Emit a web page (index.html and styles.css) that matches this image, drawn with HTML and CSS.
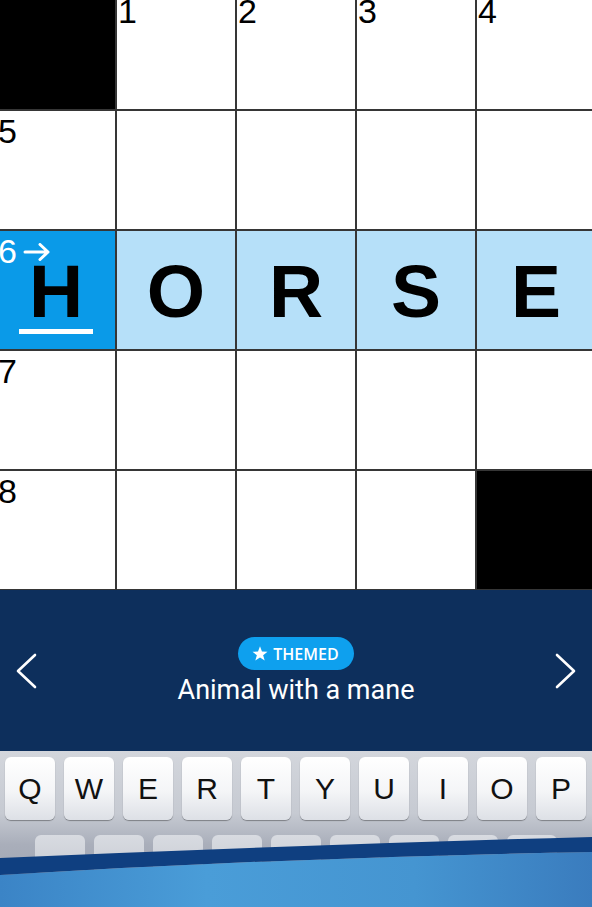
FILE: index.html
```html
<!DOCTYPE html>
<html lang="en">
<head>
    <meta charset="UTF-8">
    <meta name="viewport" content="width=device-width, initial-scale=1.0">
    <title>Crossword</title>
    <link rel="stylesheet" href="styles.css">
</head>
<body>
    <div class="screen">
        <div class="board">
            <!-- row 1 -->
            <div class="cell block"></div>
            <div class="cell"><span class="num">1</span></div>
            <div class="cell"><span class="num">2</span></div>
            <div class="cell"><span class="num">3</span></div>
            <div class="cell"><span class="num">4</span></div>
            <!-- row 2 -->
            <div class="cell"><span class="num">5</span></div>
            <div class="cell"></div>
            <div class="cell"></div>
            <div class="cell"></div>
            <div class="cell"></div>
            <!-- row 3: active word -->
            <div class="cell word active">
                <span class="num">6<svg class="dir" width="28" height="18" viewBox="0 0 28 18"><path d="M2 9 H25 M17 1.5 L25 9 L17 16.5" fill="none" stroke="#fff" stroke-width="3" stroke-linecap="round" stroke-linejoin="round"/></svg></span>
                <span class="letter">H</span>
            </div>
            <div class="cell word"><span class="letter">O</span></div>
            <div class="cell word"><span class="letter">R</span></div>
            <div class="cell word"><span class="letter">S</span></div>
            <div class="cell word"><span class="letter">E</span></div>
            <!-- row 4 -->
            <div class="cell"><span class="num">7</span></div>
            <div class="cell"></div>
            <div class="cell"></div>
            <div class="cell"></div>
            <div class="cell"></div>
            <!-- row 5 -->
            <div class="cell"><span class="num">8</span></div>
            <div class="cell"></div>
            <div class="cell"></div>
            <div class="cell"></div>
            <div class="cell block"></div>
        </div>

        <div class="clue-bar">
            <button class="nav">
                <svg width="24" height="36" viewBox="0 0 24 36"><path d="M20 2 L3 18 L20 34" fill="none" stroke="#fff" stroke-width="2.6" stroke-linecap="round" stroke-linejoin="round"/></svg>
            </button>
            <div class="clue">
                <span class="badge">
                    <svg width="16" height="15" viewBox="0 0 24 23"><path d="M12 0.5 L15 8.6 L23.5 8.8 L16.8 14.1 L19.2 22.4 L12 17.5 L4.8 22.4 L7.2 14.1 L0.5 8.8 L9 8.6 Z" fill="#fff"/></svg>
                    THEMED
                </span>
                <p class="clue-text">Animal with a mane</p>
            </div>
            <button class="nav">
                <svg width="24" height="36" viewBox="0 0 24 36"><path d="M4 2 L21 18 L4 34" fill="none" stroke="#fff" stroke-width="2.6" stroke-linecap="round" stroke-linejoin="round"/></svg>
            </button>
        </div>

        <div class="keyboard">
            <div class="key-row">
                <div class="key">Q</div>
                <div class="key">W</div>
                <div class="key">E</div>
                <div class="key">R</div>
                <div class="key">T</div>
                <div class="key">Y</div>
                <div class="key">U</div>
                <div class="key">I</div>
                <div class="key">O</div>
                <div class="key">P</div>
            </div>
            <div class="key-row second">
                <div class="key"></div>
                <div class="key"></div>
                <div class="key"></div>
                <div class="key"></div>
                <div class="key"></div>
                <div class="key"></div>
                <div class="key"></div>
                <div class="key"></div>
                <div class="key"></div>
            </div>
            <!-- blue swoosh laid over the keyboard -->
            <svg class="wave" width="592" height="156" viewBox="0 0 592 156">
                <defs>
                    <linearGradient id="sea" x1="0" y1="0" x2="1" y2="0">
                        <stop offset="0" stop-color="#3b84c6"/>
                        <stop offset="0.35" stop-color="#4a9dd8"/>
                        <stop offset="0.7" stop-color="#4595d1"/>
                        <stop offset="1" stop-color="#3a7cbe"/>
                    </linearGradient>
                </defs>
                <path d="M0 124 Q296 106 592 101 L592 156 L0 156 Z" fill="url(#sea)"/>
                <path d="M0 107 Q296 94 592 86 L592 101 Q296 106 0 124 Z" fill="#0f3f80"/>
            </svg>
        </div>
    </div>
</body>
</html>
```

FILE: styles.css
```css
/* Global */
body {
    margin: 0;
    background-color: #FFFFFF;
    font-family: 'Liberation Sans', Arial, sans-serif;
}

.screen {
    width: 592px;
    height: 907px;
    overflow: hidden;
}

/* Board */
.board {
    display: grid;
    grid-template-columns: repeat(5, 118px);
    grid-auto-rows: 118px;
    gap: 2px;
    width: 598px;
    margin: -9px 0 0 -3px;
    padding-bottom: 1px;
    background-color: #363636; /* grid lines */
}

.cell {
    position: relative;
    display: flex;
    align-items: center;
    justify-content: center;
    background-color: #FFFFFF;
}

.cell.block {
    background-color: #000000;
}

.cell.word {
    background-color: #B6E0F9; /* highlighted word */
}

.cell.active {
    background-color: #0A9AE8; /* cursor cell */
}

.num {
    position: absolute;
    top: 3px;
    left: 1px;
    display: flex;
    align-items: center;
    font-size: 34px;
    line-height: 1;
    color: #000000;
}

.active .num {
    color: #FFFFFF;
}

.dir {
    margin-left: 6px;
    margin-top: 2px;
}

.letter {
    font-size: 75px;
    font-weight: bold;
    line-height: 1;
    color: #000000;
    margin-top: 2px;
}

.active::after {
    content: "";
    position: absolute;
    left: 22px;
    top: 98px;
    width: 74px;
    height: 5px;
    background-color: #FFFFFF;
}

/* Clue bar */
.clue-bar {
    display: flex;
    align-items: center;
    justify-content: space-between;
    height: 161px;
    padding: 0 15px;
    background-color: #0D2F5C;
}

.nav {
    display: flex;
    padding: 0;
    border: none;
    background: none;
}

.clue {
    display: flex;
    flex-direction: column;
    align-items: center;
    margin-top: 1px;
}

.badge {
    display: flex;
    align-items: center;
    gap: 5px;
    height: 33px;
    padding: 0 15px 0 14px;
    border-radius: 17px;
    background-color: #0EA0EE;
    color: #FFFFFF;
    font-family: 'Open Sans', sans-serif;
    font-size: 16px;
    font-weight: 600;
}

.clue-text {
    margin: 5px 0 0;
    font-family: Roboto, sans-serif;
    font-size: 27px;
    line-height: 30px;
    color: #FFFFFF;
}

/* Keyboard */
.keyboard {
    position: relative;
    height: 156px;
    background: linear-gradient(#D3D6DC 0%, #C6CAD2 40%, #A9AEBA 60%, #9AA0AE 100%);
}

.key-row {
    display: flex;
    gap: 9px;
    padding: 6px 0 0 5px;
}

.key {
    display: flex;
    align-items: center;
    justify-content: center;
    width: 50px;
    height: 63px;
    border-radius: 6px;
    background: linear-gradient(#FFFFFF 0%, #F4F5F7 55%, #DDE0E6 100%);
    box-shadow: 0 1px 1px rgba(0, 0, 0, 0.35);
    font-size: 30px;
    color: #111111;
}

.key-row.second {
    padding: 15px 0 0 35px;
}

.key-row.second .key {
    height: 50px;
    background: linear-gradient(#D8DBE1, #C3C7CF);
    box-shadow: none;
}

.wave {
    position: absolute;
    top: 0;
    left: 0;
}
```
